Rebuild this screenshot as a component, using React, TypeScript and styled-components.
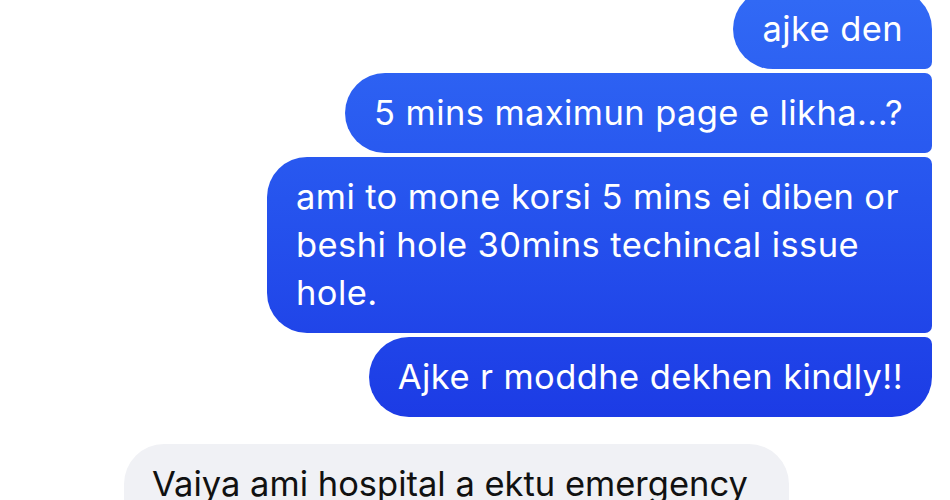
import styled, { createGlobalStyle } from 'styled-components';

const GlobalStyle = createGlobalStyle`
    html, body {
        margin: 0;
        background: #ffffff;
        overflow: hidden;
    }

    body {
        font-family: Inter, "Noto Sans", "Liberation Sans", sans-serif;
        -webkit-font-smoothing: antialiased;
    }
`;

type Corner = 'big' | 'small';

interface BubbleProps {
    $tl?: Corner;
    $tr?: Corner;
    $br?: Corner;
    $bl?: Corner;
}

const radius = (c: Corner = 'big') => (c === 'big' ? '40px' : '7px');

const Thread = styled.div`
    display: flex;
    flex-direction: column;
    margin-top: -11px;
    padding: 0 18px 0 124px;
`;

const Bubble = styled.div<BubbleProps>`
    max-width: 665px;
    box-sizing: border-box;
    padding: 16px 29px;
    font-size: 34.5px;
    line-height: 48px;
    letter-spacing: 0.4px;
    border-radius: ${(p) => `${radius(p.$tl)} ${radius(p.$tr)} ${radius(p.$br)} ${radius(p.$bl)}`};
`;

const Sent = styled(Bubble)`
    align-self: flex-end;
    color: #ffffff;
    background: linear-gradient(180deg, #3169f5 0px, #2654ee 200px, #1c3be5 420px) fixed;

    & + & {
        margin-top: 4px;
    }
`;

const Received = styled(Bubble)`
    align-self: flex-start;
    margin-top: 27px;
    padding-left: 28px;
    padding-right: 28px;
    letter-spacing: 0;
    color: #111111;
    background: #f0f1f5;
`;

export default function App() {
    return (
        <>
            <GlobalStyle />

            <Thread>
                <Sent $br="small">ajke den</Sent>

                <Sent $tr="small" $br="small">5 mins maximun page e likha...?</Sent>

                <Sent $tr="small" $br="small">
                    ami to mone korsi 5 mins ei diben or beshi hole 30mins techincal issue hole.
                </Sent>

                <Sent $tr="small">Ajke r moddhe dekhen kindly!!</Sent>

                <Received>Vaiya ami hospital a ektu emergency er jonno</Received>
            </Thread>
        </>
    );
}
